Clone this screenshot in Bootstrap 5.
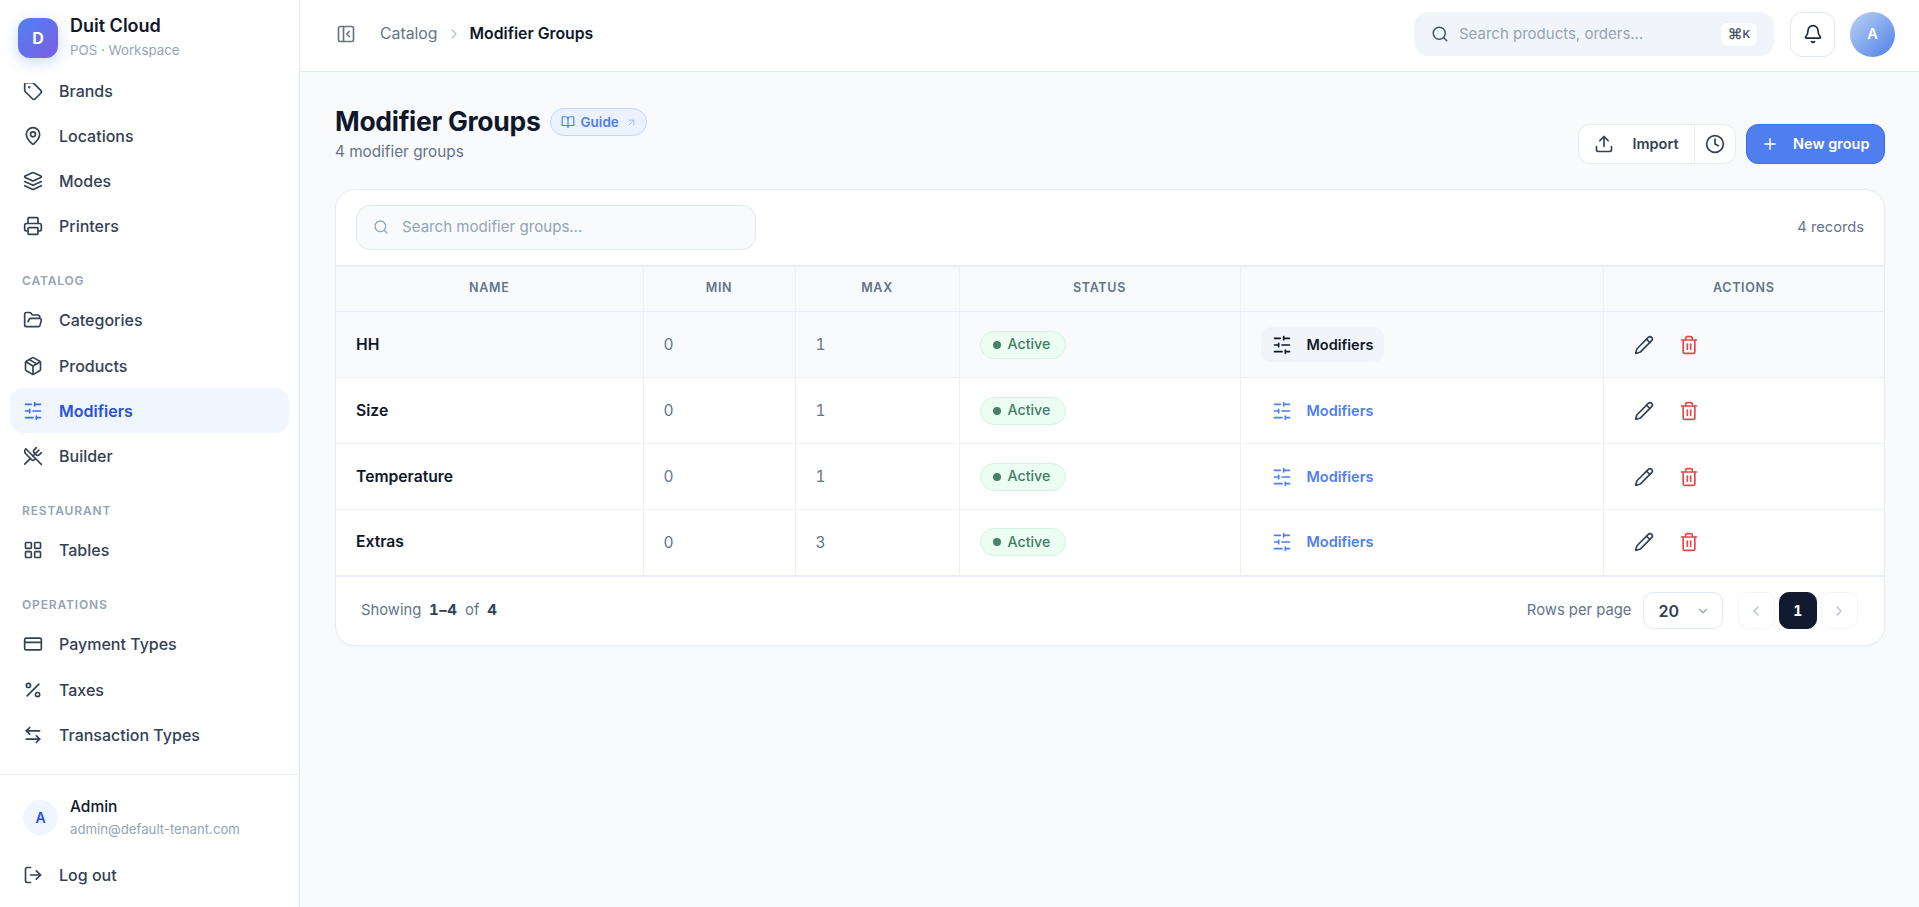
<!DOCTYPE html>
<html lang="en">
<head>
    <meta charset="UTF-8">
    <meta name="viewport" content="width=device-width, initial-scale=1.0">
    <link href="https://cdn.jsdelivr.net/npm/bootstrap@5.3.3/dist/css/bootstrap.min.css" rel="stylesheet">
    <title>Modifier Groups</title>
    <style>
        html, body { height: 100%; }
        body { font-family: Inter, "Liberation Sans", sans-serif; background: #f8fafc; color: #0f172a; overflow: hidden; }
        svg.ic { fill: none; stroke: currentColor; stroke-width: 2; stroke-linecap: round; stroke-linejoin: round; flex: none; }
        .shell { height: 100vh; }

        .sidebar { width: 300px; flex: none; background: #fff; border-right: 1px solid #e2e8f0; }
        /* brand stays on top, the scrolled nav slides under it */
        .brand { height: 83px; padding: 18px 18px 0; gap: 12px; position: relative; z-index: 1; flex: none; background: #fff; }
        .brand-logo { width: 40px; height: 40px; border-radius: 12px; background: linear-gradient(135deg, #4f82f0, #7c5ce6); color: #fff; font-weight: 700; font-size: 16px; box-shadow: 0 4px 14px rgba(79,130,240,.3); }
        .brand-name { font-size: 18px; font-weight: 600; line-height: 22px; margin-top: -3px; }
        .brand-sub { font-size: 13.3px; color: #94a3b8; line-height: 20px; margin-top: 3px; }
        .side-nav { flex: 1 1 auto; min-height: 0; padding: 0 10px; }
        .side-list { margin-top: -15px; }
        .side-link { height: 45px; margin-bottom: .3px; padding: 0 13px; gap: 16px; border-radius: 14px; color: #334155; font-size: 16px; font-weight: 500; text-decoration: none; }
        .side-link.active { background: #eff6ff; color: #2b4fe0; font-weight: 600; }
        .side-link.active svg { color: #3b6ef0; }
        .side-title { font-size: 12px; font-weight: 600; letter-spacing: .85px; color: #94a3b8; text-transform: uppercase; padding: 0 12px; margin-top: 23.5px; margin-bottom: 7.5px; line-height: 18px; height: 18px; }
        .side-foot { border-top: 1px solid #e8ecf4; padding: 20px 10px 0; height: 133px; flex: none; }
        .user-row { padding: 0 13px; gap: 12px; height: 45px; }
        .user-ava { width: 35px; height: 35px; border-radius: 50%; background: #eff6ff; color: #2b4fe0; font-size: 14px; font-weight: 600; }
        .user-info { padding-top: 1px; }
        .user-name { font-size: 15.5px; font-weight: 500; line-height: 20px; }
        .user-mail { font-size: 13.2px; color: #94a3b8; line-height: 20px; margin-top: 2px; }
        .logout-link { margin-top: 12.5px; }

        .topbar { height: 72px; background: #fff; border-bottom: 1px solid #e2e8f0; padding: 0 24px 3px 36px; flex: none; }
        .crumb { font-size: 15.8px; color: #64748b; font-weight: 400; }
        .crumb b { color: #0f172a; font-weight: 600; }
        .top-search { width: 360px; height: 44px; background: #f1f5f9; border-radius: 14px; padding: 0 17px; gap: 10px; color: #94a3b8; font-size: 15px; }
        .top-search svg { color: #475569; }
        .kbd-chip { margin-left: auto; width: 38px; height: 25px; background: #fff; border: 1px solid #eef2f7; border-radius: 7px; color: #475569; font-size: 15px; font-weight: 600; margin-right: -1px; }
        .kbd-chip small { font-size: 11px; font-weight: 600; }
        .bell-btn { width: 45px; height: 45px; background: #fff; border: 1px solid #e2e8f0; border-radius: 12px; color: #1e293b; margin-right: -1px; }
        .top-ava { width: 45px; height: 45px; border-radius: 50%; background: linear-gradient(135deg, #bcd3f5, #4f7fe8); color: #fff; font-size: 14.5px; font-weight: 600; }

        .page { padding: 32px 34px 0 35px; }
        .page-title { font-size: 26.5px; font-weight: 700; line-height: 34px; margin: 0 0 2px; letter-spacing: -.3px; }
        .guide-chip { height: 28px; padding: 0 8.5px 0 9.5px; gap: 5.5px; margin-left: 10px; background: #ebf1fd; border: 1px solid #c5d7fb; border-radius: 14px; color: #4f7ef0; font-size: 13.5px; font-weight: 600; }
        .guide-chip .arrow { color: #a5bdf5; margin-left: 2px; }
        .page-sub { font-size: 15.3px; color: #64748b; line-height: 22px; margin-top: .5px; }
        .head-actions { margin-bottom: -1.5px; gap: 10px; }
        .btn-group-import { height: 40px; background: #fff; border: 1px solid #e8ecf4; border-radius: 12px; }
        .btn-import { padding: 0 15px; gap: 18px; border-right: 1px solid #e8ecf4; color: #334155; font-size: 14.5px; font-weight: 600; height: 100%; }
        .btn-hist { width: 40px; height: 100%; color: #334155; }
        .btn-new { height: 40px; background: #4f7eee; border: 1px solid #3d6fe6; border-radius: 12px; color: #fff; font-size: 14.5px; font-weight: 600; padding: 0 14.5px; gap: 14px; }
        .btn-new:hover { background: #4f7eee; color: #fff; border-color: #3d6fe6; }

        .data-card { margin-top: 26px; border: 1px solid #e8ecf4; border-radius: 20px; background: #fff; overflow: hidden; box-shadow: 0 1px 2px rgba(15,23,42,.03); }
        .card-tools { height: 75px; padding: 0 20px; }
        .card-search { width: 400px; height: 45px; border: 1px solid #e2e8f0; background: #f8fafc; border-radius: 14px; padding: 0 16px; gap: 13px; color: #94a3b8; font-size: 15.1px; }
        .rec-count { font-size: 14.7px; color: #64748b; }
        .data-table { table-layout: fixed; margin: 0; width: 100%; border-top: 2px solid #e8ecf4; --bs-table-bg: transparent; }
        .data-table th, .data-table td { border-right: 1px solid #eef2f7; border-bottom: 1px solid #eef2f7; vertical-align: middle; padding: 0 20px; }
        .data-table th:last-child, .data-table td:last-child { border-right: 0; }
        .data-table th { height: 46px; background: #f8fafc; text-align: center; font-size: 12.5px; font-weight: 600; letter-spacing: .7px; color: #64748b; text-transform: uppercase; border-bottom-color: #e8ecf4; }
        .data-table td { height: 66px; font-size: 15.5px; color: #64748b; font-variant-numeric: tabular-nums; }
        .data-table tbody tr:last-child td { border-bottom: 2px solid #e8ecf4; }
        .data-table tr.hovered td { background: #f8fafc; }
        .data-table .name-cell { font-weight: 600; color: #0f172a; font-size: 15.7px; }
        .status-chip { height: 28px; padding: 0 15px 0 12px; gap: 7px; background: #ecfdf3; border: 1px solid #d1f5e0; border-radius: 14px; color: #3f7d63; font-size: 14.2px; font-weight: 500; line-height: 1; }
        .status-dot { width: 8px; height: 8px; border-radius: 50%; background: #4a8068; }
        .mod-link { height: 35px; padding: 0 11px; gap: 15px; border-radius: 10px; color: #4f7ef0; font-size: 14.5px; font-weight: 600; }
        .hovered .mod-link { background: #f1f5f9; color: #0f172a; }
        .act-cell { padding-left: 30px !important; }
        .act-btns { gap: 25px; }
        .act-edit { color: #334155; }
        .act-del { color: #e5484d; }
        .card-foot { height: 68px; padding: 0 26px 0 25px; font-size: 14.8px; color: #64748b; }
        .card-foot b { color: #334155; font-weight: 700; margin: 0 3.5px; letter-spacing: .5px; font-size: 15px; font-variant-numeric: tabular-nums; }
        .rows-select { width: 80px; height: 37px; border: 1px solid #e2e8f0; border-radius: 10px; padding: 0 12px 0 15px; margin-left: 11px; color: #334155; font-size: 16px; font-weight: 600; }
        .rows-select svg { color: #94a3b8; }
        .pager { margin-left: 15px; }
        .page-btn { width: 37.5px; height: 37px; border: 1px solid #f1f5f9; border-radius: 10px; color: #b6c0cf; }
        .page-btn.current { background: #111a2e; border-color: #111a2e; color: #fff; font-size: 14px; font-weight: 700; font-variant-numeric: tabular-nums; }
    </style>
</head>
<body>

    <svg width="0" height="0" class="position-absolute">
        <symbol id="i-tag" viewBox="0 0 24 24"><path d="M12.586 2.586A2 2 0 0 0 11.172 2H4a2 2 0 0 0-2 2v7.172a2 2 0 0 0 .586 1.414l8.704 8.704a2.426 2.426 0 0 0 3.42 0l6.58-6.58a2.426 2.426 0 0 0 0-3.42z"/><circle cx="7.5" cy="7.5" r=".5" fill="currentColor"/></symbol>
        <symbol id="i-pin" viewBox="0 0 24 24"><path d="M20 10c0 4.993-5.539 10.193-7.399 11.799a1 1 0 0 1-1.202 0C9.539 20.193 4 14.993 4 10a8 8 0 0 1 16 0"/><circle cx="12" cy="10" r="3"/></symbol>
        <symbol id="i-layers" viewBox="0 0 24 24"><path d="m12.83 2.18a2 2 0 0 0-1.66 0L2.6 6.08a1 1 0 0 0 0 1.83l8.58 3.91a2 2 0 0 0 1.66 0l8.58-3.9a1 1 0 0 0 0-1.83Z"/><path d="m22 17.65-9.17 4.16a2 2 0 0 1-1.66 0L2 17.65"/><path d="m22 12.65-9.17 4.16a2 2 0 0 1-1.66 0L2 12.65"/></symbol>
        <symbol id="i-printer" viewBox="0 0 24 24"><path d="M6 18H4a2 2 0 0 1-2-2v-5a2 2 0 0 1 2-2h16a2 2 0 0 1 2 2v5a2 2 0 0 1-2 2h-2"/><path d="M6 9V3a1 1 0 0 1 1-1h10a1 1 0 0 1 1 1v6"/><rect x="6" y="14" width="12" height="8" rx="1"/></symbol>
        <symbol id="i-folder" viewBox="0 0 24 24"><path d="m6 14 1.5-2.9A2 2 0 0 1 9.24 10H20a2 2 0 0 1 1.94 2.5l-1.54 6a2 2 0 0 1-1.95 1.5H4a2 2 0 0 1-2-2V5a2 2 0 0 1 2-2h3.9a2 2 0 0 1 1.69.9l.81 1.2a2 2 0 0 0 1.67.9H18a2 2 0 0 1 2 2v2"/></symbol>
        <symbol id="i-box" viewBox="0 0 24 24"><path d="M11 21.73a2 2 0 0 0 2 0l7-4A2 2 0 0 0 21 16V8a2 2 0 0 0-1-1.73l-7-4a2 2 0 0 0-2 0l-7 4A2 2 0 0 0 3 8v8a2 2 0 0 0 1 1.73z"/><path d="M12 22V12"/><path d="m3.3 7 8.7 5 8.7-5"/><path d="m7.5 4.27 9 5.15"/></symbol>
        <symbol id="i-sliders" viewBox="0 0 24 24"><path d="M21 4h-7M10 4H3M21 12h-9M8 12H3M21 20h-5M12 20H3M14 2v4M8 10v4M16 18v4"/></symbol>
        <symbol id="i-utensils" viewBox="0 0 24 24"><path d="m16 2-2.3 2.3a3 3 0 0 0 0 4.2l1.8 1.8a3 3 0 0 0 4.2 0L22 8"/><path d="M15 15 3.3 3.3a4.2 4.2 0 0 0 0 6l7.3 7.3c.7.7 2 .7 2.8 0L15 15Zm0 0 7 7"/><path d="m2.1 21.8 6.4-6.3"/><path d="m19 5-7 7"/></symbol>
        <symbol id="i-grid" viewBox="0 0 24 24"><rect width="7" height="7" x="3" y="3" rx="1"/><rect width="7" height="7" x="14" y="3" rx="1"/><rect width="7" height="7" x="14" y="14" rx="1"/><rect width="7" height="7" x="3" y="14" rx="1"/></symbol>
        <symbol id="i-card" viewBox="0 0 24 24"><rect width="20" height="14" x="2" y="5" rx="2"/><path d="M2 10h20"/></symbol>
        <symbol id="i-percent" viewBox="0 0 24 24"><path d="M19 5 5 19"/><circle cx="6.5" cy="6.5" r="2.5"/><circle cx="17.5" cy="17.5" r="2.5"/></symbol>
        <symbol id="i-swap" viewBox="0 0 24 24"><path d="M8 3 4 7l4 4"/><path d="M4 7h16"/><path d="m16 21 4-4-4-4"/><path d="M20 17H4"/></symbol>
        <symbol id="i-logout" viewBox="0 0 24 24"><path d="M9 21H5a2 2 0 0 1-2-2V5a2 2 0 0 1 2-2h4"/><path d="m16 17 5-5-5-5"/><path d="M21 12H9"/></symbol>
        <symbol id="i-panel" viewBox="0 0 24 24"><rect width="18" height="18" x="3" y="3" rx="2"/><path d="M9 3v18"/><path d="m16 15-3-3 3-3"/></symbol>
        <symbol id="i-right" viewBox="0 0 24 24"><path d="m9 18 6-6-6-6"/></symbol>
        <symbol id="i-left" viewBox="0 0 24 24"><path d="m15 18-6-6 6-6"/></symbol>
        <symbol id="i-down" viewBox="0 0 24 24"><path d="m6 9 6 6 6-6"/></symbol>
        <symbol id="i-search" viewBox="0 0 24 24"><circle cx="11" cy="11" r="8"/><path d="m21 21-4.3-4.3"/></symbol>
        <symbol id="i-bell" viewBox="0 0 24 24"><path d="M10.268 21a2 2 0 0 0 3.464 0"/><path d="M3.262 15.326A1 1 0 0 0 4 17h16a1 1 0 0 0 .74-1.673C19.41 13.956 18 12.499 18 8A6 6 0 0 0 6 8c0 4.499-1.411 5.956-2.738 7.326"/></symbol>
        <symbol id="i-book" viewBox="0 0 24 24"><path d="M12 7v14"/><path d="M3 18a1 1 0 0 1-1-1V4a1 1 0 0 1 1-1h5a4 4 0 0 1 4 4 4 4 0 0 1 4-4h5a1 1 0 0 1 1 1v13a1 1 0 0 1-1 1h-6a3 3 0 0 0-3 3 3 3 0 0 0-3-3z"/></symbol>
        <symbol id="i-ext" viewBox="0 0 24 24"><path d="M7 7h10v10"/><path d="M7 17 17 7"/></symbol>
        <symbol id="i-upload" viewBox="0 0 24 24"><path d="M21 15v4a2 2 0 0 1-2 2H5a2 2 0 0 1-2-2v-4"/><path d="m17 8-5-5-5 5"/><path d="M12 3v12"/></symbol>
        <symbol id="i-clock" viewBox="0 0 24 24"><circle cx="12" cy="12" r="10"/><path d="M12 6v6l4 2"/></symbol>
        <symbol id="i-plus" viewBox="0 0 24 24"><path d="M5 12h14"/><path d="M12 5v14"/></symbol>
        <symbol id="i-pencil" viewBox="0 0 24 24"><path d="M21.174 6.812a1 1 0 0 0-3.986-3.987L3.842 16.174a2 2 0 0 0-.5.83l-1.321 4.352a.5.5 0 0 0 .623.622l4.353-1.32a2 2 0 0 0 .83-.497z"/><path d="m15 5 4 4"/></symbol>
        <symbol id="i-trash" viewBox="0 0 24 24"><path d="M3 6h18"/><path d="M19 6v14c0 1-1 2-2 2H7c-1 0-2-1-2-2V6"/><path d="M8 6V4c0-1 1-2 2-2h4c1 0 2 1 2 2v2"/><path d="M10 11v6"/><path d="M14 11v6"/></symbol>
    </svg>

    <div class="shell d-flex">

        <aside class="sidebar d-flex flex-column">
            <div class="brand d-flex align-items-start">
                <div class="brand-logo d-flex align-items-center justify-content-center">D</div>
                <div>
                    <div class="brand-name">Duit Cloud</div>
                    <div class="brand-sub">POS · Workspace</div>
                </div>
            </div>
            <nav class="side-nav">
                <div class="side-list">
                    <a class="side-link d-flex align-items-center" href="#"><svg class="ic" width="20" height="20"><use href="#i-tag"/></svg>Brands</a>
                    <a class="side-link d-flex align-items-center" href="#"><svg class="ic" width="20" height="20"><use href="#i-pin"/></svg>Locations</a>
                    <a class="side-link d-flex align-items-center" href="#"><svg class="ic" width="20" height="20"><use href="#i-layers"/></svg>Modes</a>
                    <a class="side-link d-flex align-items-center" href="#"><svg class="ic" width="20" height="20"><use href="#i-printer"/></svg>Printers</a>
                    <div class="side-title">Catalog</div>
                    <a class="side-link d-flex align-items-center" href="#"><svg class="ic" width="20" height="20"><use href="#i-folder"/></svg>Categories</a>
                    <a class="side-link d-flex align-items-center" href="#"><svg class="ic" width="20" height="20"><use href="#i-box"/></svg>Products</a>
                    <a class="side-link active d-flex align-items-center" href="#"><svg class="ic" width="20" height="20"><use href="#i-sliders"/></svg>Modifiers</a>
                    <a class="side-link d-flex align-items-center" href="#"><svg class="ic" width="20" height="20"><use href="#i-utensils"/></svg>Builder</a>
                    <div class="side-title">Restaurant</div>
                    <a class="side-link d-flex align-items-center" href="#"><svg class="ic" width="20" height="20"><use href="#i-grid"/></svg>Tables</a>
                    <div class="side-title">Operations</div>
                    <a class="side-link d-flex align-items-center" href="#"><svg class="ic" width="20" height="20"><use href="#i-card"/></svg>Payment Types</a>
                    <a class="side-link d-flex align-items-center" href="#"><svg class="ic" width="20" height="20"><use href="#i-percent"/></svg>Taxes</a>
                    <a class="side-link d-flex align-items-center" href="#"><svg class="ic" width="20" height="20"><use href="#i-swap"/></svg>Transaction Types</a>
                </div>
            </nav>
            <div class="side-foot">
                <div class="user-row d-flex align-items-center">
                    <div class="user-ava d-flex align-items-center justify-content-center flex-shrink-0">A</div>
                    <div class="user-info">
                        <div class="user-name">Admin</div>
                        <div class="user-mail">admin@default-tenant.com</div>
                    </div>
                </div>
                <a class="side-link logout-link d-flex align-items-center" href="#"><svg class="ic" width="20" height="20"><use href="#i-logout"/></svg>Log out</a>
            </div>
        </aside>

        <div class="flex-grow-1 d-flex flex-column">

            <header class="topbar d-flex align-items-center justify-content-between">
                <div class="crumb d-flex align-items-center">
                    <svg class="ic text-secondary me-4" width="20" height="20"><use href="#i-panel"/></svg>
                    <span>Catalog</span>
                    <svg class="ic mx-2" width="16" height="16" style="color:#b6c0cf"><use href="#i-right"/></svg>
                    <b>Modifier Groups</b>
                </div>
                <div class="d-flex align-items-center gap-3">
                    <div class="top-search d-flex align-items-center">
                        <svg class="ic" width="18" height="18"><use href="#i-search"/></svg>
                        <span>Search products, orders…</span>
                        <span class="kbd-chip d-flex align-items-center justify-content-center">⌘<small>K</small></span>
                    </div>
                    <div class="bell-btn d-flex align-items-center justify-content-center"><svg class="ic" width="20" height="20"><use href="#i-bell"/></svg></div>
                    <div class="top-ava d-flex align-items-center justify-content-center">A</div>
                </div>
            </header>

            <main class="page flex-grow-1">
                <div class="d-flex justify-content-between align-items-end">
                    <div>
                        <div class="d-flex align-items-center">
                            <h1 class="page-title">Modifier Groups</h1>
                            <span class="guide-chip d-inline-flex align-items-center">
                                <svg class="ic" width="14" height="14"><use href="#i-book"/></svg>Guide
                                <svg class="ic arrow" width="11" height="11"><use href="#i-ext"/></svg>
                            </span>
                        </div>
                        <div class="page-sub">4 modifier groups</div>
                    </div>
                    <div class="head-actions d-flex">
                        <div class="btn-group-import d-flex align-items-center">
                            <div class="btn-import d-flex align-items-center"><svg class="ic" width="20" height="20"><use href="#i-upload"/></svg>Import</div>
                            <div class="btn-hist d-flex align-items-center justify-content-center"><svg class="ic" width="20" height="20"><use href="#i-clock"/></svg></div>
                        </div>
                        <button class="btn btn-new d-flex align-items-center"><svg class="ic" width="18" height="18"><use href="#i-plus"/></svg>New group</button>
                    </div>
                </div>

                <div class="data-card">
                    <div class="card-tools d-flex align-items-center justify-content-between">
                        <div class="card-search d-flex align-items-center">
                            <svg class="ic" width="16" height="16" style="color:#94a3b8"><use href="#i-search"/></svg>
                            <span>Search modifier groups…</span>
                        </div>
                        <span class="rec-count">4 records</span>
                    </div>

                    <table class="table data-table">
                        <colgroup>
                            <col style="width:307px"><col style="width:152px"><col style="width:164px"><col style="width:281px"><col style="width:363px"><col>
                        </colgroup>
                        <thead>
                            <tr><th>Name</th><th>Min</th><th>Max</th><th>Status</th><th></th><th>Actions</th></tr>
                        </thead>
                        <tbody>
                            <tr class="hovered">
                                <td class="name-cell">HH</td><td>0</td><td>1</td>
                                <td><span class="status-chip d-inline-flex align-items-center"><span class="status-dot"></span>Active</span></td>
                                <td><span class="mod-link d-inline-flex align-items-center"><svg class="ic" width="20" height="20"><use href="#i-sliders"/></svg>Modifiers</span></td>
                                <td class="act-cell"><div class="act-btns d-flex align-items-center"><svg class="ic act-edit" width="20" height="20"><use href="#i-pencil"/></svg><svg class="ic act-del" width="20" height="20"><use href="#i-trash"/></svg></div></td>
                            </tr>
                            <tr>
                                <td class="name-cell">Size</td><td>0</td><td>1</td>
                                <td><span class="status-chip d-inline-flex align-items-center"><span class="status-dot"></span>Active</span></td>
                                <td><span class="mod-link d-inline-flex align-items-center"><svg class="ic" width="20" height="20"><use href="#i-sliders"/></svg>Modifiers</span></td>
                                <td class="act-cell"><div class="act-btns d-flex align-items-center"><svg class="ic act-edit" width="20" height="20"><use href="#i-pencil"/></svg><svg class="ic act-del" width="20" height="20"><use href="#i-trash"/></svg></div></td>
                            </tr>
                            <tr>
                                <td class="name-cell">Temperature</td><td>0</td><td>1</td>
                                <td><span class="status-chip d-inline-flex align-items-center"><span class="status-dot"></span>Active</span></td>
                                <td><span class="mod-link d-inline-flex align-items-center"><svg class="ic" width="20" height="20"><use href="#i-sliders"/></svg>Modifiers</span></td>
                                <td class="act-cell"><div class="act-btns d-flex align-items-center"><svg class="ic act-edit" width="20" height="20"><use href="#i-pencil"/></svg><svg class="ic act-del" width="20" height="20"><use href="#i-trash"/></svg></div></td>
                            </tr>
                            <tr>
                                <td class="name-cell">Extras</td><td>0</td><td>3</td>
                                <td><span class="status-chip d-inline-flex align-items-center"><span class="status-dot"></span>Active</span></td>
                                <td><span class="mod-link d-inline-flex align-items-center"><svg class="ic" width="20" height="20"><use href="#i-sliders"/></svg>Modifiers</span></td>
                                <td class="act-cell"><div class="act-btns d-flex align-items-center"><svg class="ic act-edit" width="20" height="20"><use href="#i-pencil"/></svg><svg class="ic act-del" width="20" height="20"><use href="#i-trash"/></svg></div></td>
                            </tr>
                        </tbody>
                    </table>

                    <div class="card-foot d-flex align-items-center justify-content-between">
                        <div>Showing <b>1–4</b> of <b>4</b></div>
                        <div class="d-flex align-items-center">
                            <span>Rows per page</span>
                            <div class="rows-select d-flex align-items-center justify-content-between">20<svg class="ic" width="14" height="14"><use href="#i-down"/></svg></div>
                            <div class="pager d-flex align-items-center gap-1">
                                <div class="page-btn d-flex align-items-center justify-content-center"><svg class="ic" width="16" height="16"><use href="#i-left"/></svg></div>
                                <div class="page-btn current d-flex align-items-center justify-content-center">1</div>
                                <div class="page-btn d-flex align-items-center justify-content-center"><svg class="ic" width="16" height="16"><use href="#i-right"/></svg></div>
                            </div>
                        </div>
                    </div>
                </div>
            </main>

        </div>
    </div>

</body>
<script src="https://cdn.jsdelivr.net/npm/bootstrap@5.3.3/dist/js/bootstrap.bundle.min.js"></script>
</html>
